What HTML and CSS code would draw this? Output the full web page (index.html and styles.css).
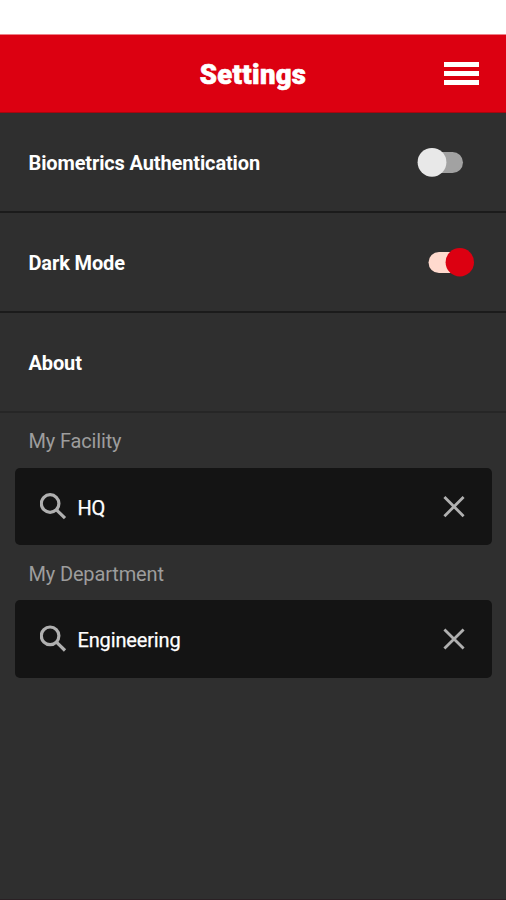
FILE: index.html
```html
<!DOCTYPE html>
<html lang="en">
<head>
<meta charset="utf-8">
<title>Settings</title>
<link rel="stylesheet" href="styles.css">
</head>
<body>
<div class="status"></div>
<header class="header">
  <h1 class="title">Settings</h1>
  <div class="menu"><span></span><span></span><span></span></div>
</header>
<main>
  <div class="row">
    <span class="label">Biometrics Authentication</span>
    <svg class="toggle off" width="46" height="30" viewBox="0 0 46 30"><rect class="track" x="5" y="5" width="41" height="21" rx="10.5"/><circle class="knob" cx="15" cy="15.3" r="14.4"/></svg>
  </div>
  <div class="row">
    <span class="label">Dark Mode</span>
    <svg class="toggle on" width="46" height="30" viewBox="0 0 46 30"><rect class="track" x="0.5" y="5" width="40" height="21" rx="10.5"/><circle class="knob" cx="31.8" cy="15.2" r="14.2"/></svg>
  </div>
  <div class="row about"><span class="label">About</span></div>
  <div class="caption">My Facility</div>
  <div class="field">
    <svg class="search" width="28" height="28" viewBox="0 0 28 28"><circle cx="10.1" cy="10.5" r="8.8"/><path d="M16.2 16.6L25 25.2"/></svg>
    <span class="value">HQ</span>
    <svg class="clear" width="22" height="22" viewBox="0 0 22 22"><path d="M1.4 1L20.6 20.2M20.6 1L1.4 20.2"/></svg>
  </div>
  <div class="caption second">My Department</div>
  <div class="field">
    <svg class="search" width="28" height="28" viewBox="0 0 28 28"><circle cx="10.1" cy="10.8" r="8.8"/><path d="M16.2 16.9L25 25.5"/></svg>
    <span class="value">Engineering</span>
    <svg class="clear" width="22" height="22" viewBox="0 0 22 22"><path d="M1.4 1.4L20.6 20.6M20.6 1.4L1.4 20.6"/></svg>
  </div>
</main>
</body>
</html>
```
FILE: styles.css
```css
* { box-sizing: border-box; }
body {
  margin: 0;
  height: 900px;
  display: flex;
  flex-direction: column;
  overflow: hidden;
  background: #2f2f2f;
  color: #fff;
  font-family: Roboto, "Liberation Sans", sans-serif;
}
.status { height: 34px; background: #fff; }
.header {
  height: 79px;
  display: grid;
  grid-template-columns: 1fr auto 1fr;
  align-items: center;
  padding: 0 27px;
  background: #dc0011;
  border-top: 1px solid #ed8088;
  border-bottom: 1px solid #a5060f;
}
.title {
  grid-column: 2;
  margin: 3px 0 0;
  font-size: 27.5px;
  line-height: 32px;
  font-weight: 900;
  letter-spacing: 0.3px;
  -webkit-text-stroke: 0.6px #fff;
}
.menu {
  justify-self: end;
  width: 35px;
  display: grid;
  gap: 4px;
}
.menu span { height: 5px; background: #fff; }
main { flex: 1; border-bottom: 1px solid #2a2024; }
.row {
  height: 100px;
  display: flex;
  align-items: center;
  justify-content: space-between;
  padding: 0 32px 0 28.5px;
  border-bottom: 2px solid #1b1b1b;
}
.row.about { border-bottom-color: #262626; }
.label { font-size: 20px; font-weight: 700; line-height: 24px; margin-top: 2px; letter-spacing: -0.13px; }
.toggle { display: block; overflow: visible; }
.toggle.off { margin-right: 11px; }
.off .track { fill: #a2a2a2; }
.off .knob { fill: #e8e8e8; }
.on .track { fill: #ffdace; }
.on .knob { fill: #dc0011; }
.caption {
  height: 55px;
  padding: 16px 0 0 28.5px;
  font-size: 20px;
  line-height: 24px;
  letter-spacing: -0.15px;
  color: #9d9d9d;
}
.caption.second { padding-top: 17px; }
.field {
  height: 77px;
  margin: 0 14px 0 14.5px;
  padding: 0 27px 0 25px;
  display: flex;
  align-items: center;
  background: #141414;
  border-radius: 5px;
}
.field + .caption + .field { height: 77.5px; }
.value {
  flex: 1;
  margin: 3px 0 0 10px;
  font-size: 20px;
  line-height: 24px;
  letter-spacing: -0.15px;
  -webkit-text-stroke: 0.25px #fff;
}
.search, .clear { fill: none; stroke: #b0b0b0; stroke-width: 3.2; }
.clear { stroke-width: 2.8; }
```
